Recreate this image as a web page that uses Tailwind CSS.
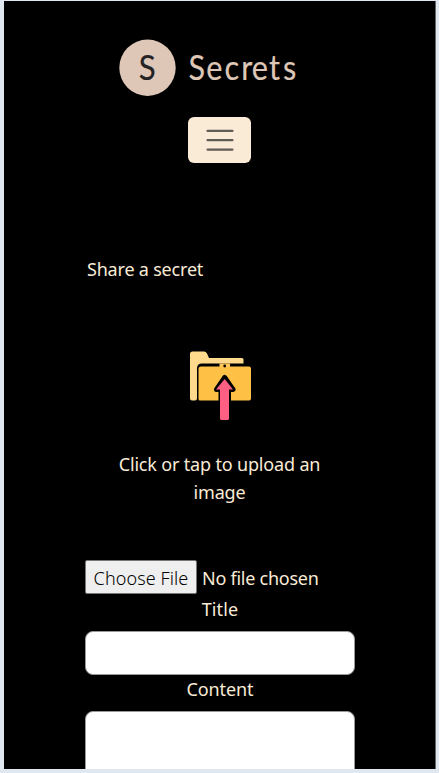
<!DOCTYPE html>
<html lang="en">
<head>
<meta charset="utf-8">
<title>Secrets</title>
<script src="https://cdn.jsdelivr.net/npm/@tailwindcss/browser@4"></script>
</head>
<body class="bg-[#dfe7f1] overflow-hidden">
<div class="h-[773px] pl-1 pr-[3px] pt-px pb-1">
<main class="h-[768px] overflow-hidden border-r border-[#666] bg-black px-[81px] pr-[80px] text-[18px] leading-7 text-[#faebd7] font-['Noto_Sans',sans-serif] flex flex-col">
  <header class="flex flex-col items-center pt-[38px]">
    <svg class="mr-[25px] block h-[58px] w-[180px]" viewBox="118 39 180 58" role="img" aria-label="Secrets">
      <circle cx="147.500" cy="67.800" r="28.200" fill="#dfc7b8"/>
      <text transform="translate(138.800 80) scale(.92 1)" font-family="Lato, sans-serif" font-size="34" fill="#242222" stroke="#242222" stroke-width=".2">S</text>
      <text transform="translate(188.500 80) scale(.9 1)" x="0 19.700 40 58.500 70.300 89.500 105" font-family="Lato, sans-serif" font-size="34" fill="#dfc7b8" stroke="#dfc7b8" stroke-width=".2">Secrets</text>
    </svg>
    <button class="mr-px mt-5 flex h-[46px] w-[63px] items-center justify-center rounded-md bg-[#faebd7]" aria-label="Menu">
      <svg class="h-[34px] w-[34px]" viewBox="0 0 30 30" fill="none" stroke="#625c57" stroke-width="2" stroke-linecap="round"><path d="M4 7h22M4 15.200h22M4 23.400h22"/></svg>
    </button>
  </header>
  <h1 class="mt-[92px] pl-[2px]"><span class="tracking-[-0.2px]">Share a secret</span></h1>
  <div class="mt-[65px] flex flex-col items-center">
    <svg class="block h-[76px] w-[68px]" viewBox="186 348 68 76">
      <path d="M190 354q0-2.500 2.500-2.500h11.500q2 0 3 2l2 4.500h33q1.500 0 1.500 1.500v4H202q-5 0-5 5v30q0 2-2 2h-3q-2 0-2-2z" fill="#ffda8c"/>
      <path d="M198.500 369q0-2.500 2.500-2.500h48q2 0 2 2v30q0 2-2 2h-49q-1.500 0-1.500-1.500z" fill="#ffc046"/>
      <path d="M219.500 363.500h10.500v3.500h-10.500z" fill="#ffc75c"/>
      <circle cx="224.700" cy="366" r="1.400" fill="#000"/>
      <path d="M224.700 377.500L233 389.500h-4.500v29.500h-7.500V389.500h-4.500z" fill="#000" stroke="#000" stroke-width="5" stroke-linejoin="round"/>
      <path d="M224.700 379l8.300 10.500h-4v29q0 1.500-1.500 1.500h-6q-1.500 0-1.500-1.500v-29h-4z" fill="#ff5f83"/>
    </svg>
    <p class="mr-px mt-[26px] w-[230px] text-center tracking-[-0.17px]">Click or tap to upload an image</p>
  </div>
  <form class="mt-[54px] text-center">
    <div class="flex h-[34px] items-center text-left">
      <button type="button" class="h-[34px] w-28 shrink-0 whitespace-nowrap rounded-xs border border-[#767676] bg-[#efefef] pt-px font-['Noto_Sans',sans-serif] text-[18px] font-light tracking-[0.1px] text-black">Choose File</button>
      <span class="ml-[5px] whitespace-nowrap pt-px tracking-[-0.25px]">No file chosen</span>
    </div>
    <label for="title" class="mt-px block tracking-[0.1px]">Title</label>
    <input id="title" class="mt-[8px] block h-11 w-full rounded-lg border border-[#999] bg-white px-3">
    <label for="content" class="block tracking-[-0.1px]">Content</label>
    <textarea id="content" class="mt-[8px] block h-[100px] w-full resize-none rounded-lg border border-[#999] bg-white px-3"></textarea>
  </form>
</main>
</div>
</body>
</html>
